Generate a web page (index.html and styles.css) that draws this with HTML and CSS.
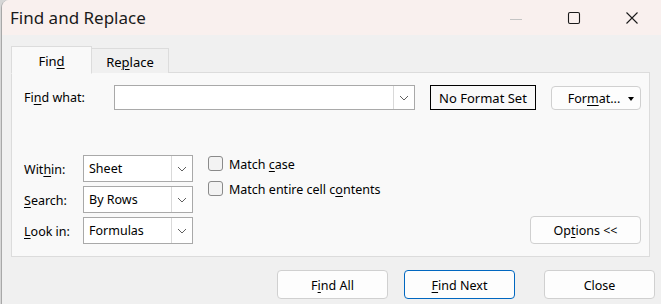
FILE: index.html
```html
<!DOCTYPE html>
<html lang="en">
<head>
    <meta charset="UTF-8">
    <title>Find and Replace</title>
    <link rel="stylesheet" href="styles.css">
</head>
<body>
    <div class="window">
        <div class="titlebar">
            <span class="title">Find and Replace</span>
            <div class="controls">
                <span class="ctl ctl-min"><svg width="14" height="14" viewBox="0 0 14 14"><path d="M1 7.5h12" stroke="#c4c4c4" stroke-width="1"/></svg></span>
                <span class="ctl"><svg width="14" height="14" viewBox="0 0 14 14"><rect x="1.5" y="1.5" width="11" height="11" rx="1.5" fill="none" stroke="#1a1a1a" stroke-width="1.1"/></svg></span>
                <span class="ctl"><svg width="14" height="14" viewBox="0 0 14 14"><path d="M1.5 1.5l11 11M12.5 1.5l-11 11" stroke="#1a1a1a" stroke-width="1.1"/></svg></span>
            </div>
        </div>

        <div class="content">
            <div class="tabs">
                <div class="tab active"><span>Fin<u>d</u></span></div>
                <div class="tab"><span>Re<u>p</u>lace</span></div>
            </div>

            <div class="panel">
                <div class="row-find">
                    <label class="lbl-find">Fi<u>n</u>d what:</label>
                    <div class="combo combo-wide">
                        <span class="combo-text"></span>
                        <span class="combo-btn"><svg width="10" height="6" viewBox="0 0 10 6"><path d="M1 1l4 4 4-4" fill="none" stroke="#606060" stroke-width="1"/></svg></span>
                    </div>
                    <div class="format-preview">No Format Set</div>
                    <button class="btn btn-format"><span>For<u>m</u>at...</span> <span class="caret"></span></button>
                </div>

                <div class="lower">
                    <div class="options-grid">
                        <label>Wit<u>h</u>in:</label>
                        <div class="combo combo-sel">
                            <span class="combo-text">Sheet</span>
                            <span class="combo-btn"><svg width="10" height="6" viewBox="0 0 10 6"><path d="M1 1l4 4 4-4" fill="none" stroke="#606060" stroke-width="1"/></svg></span>
                        </div>
                        <label><u>S</u>earch:</label>
                        <div class="combo combo-sel">
                            <span class="combo-text">By Rows</span>
                            <span class="combo-btn"><svg width="10" height="6" viewBox="0 0 10 6"><path d="M1 1l4 4 4-4" fill="none" stroke="#606060" stroke-width="1"/></svg></span>
                        </div>
                        <label><u>L</u>ook in:</label>
                        <div class="combo combo-sel">
                            <span class="combo-text">Formulas</span>
                            <span class="combo-btn"><svg width="10" height="6" viewBox="0 0 10 6"><path d="M1 1l4 4 4-4" fill="none" stroke="#606060" stroke-width="1"/></svg></span>
                        </div>
                    </div>

                    <div class="checks">
                        <div class="check"><span class="box"></span><span class="check-text">Match <u>c</u>ase</span></div>
                        <div class="check"><span class="box"></span><span class="check-text">Match entire cell c<u>o</u>ntents</span></div>
                    </div>

                    <button class="btn btn-options"><span>Op<u>t</u>ions &lt;&lt;</span></button>
                </div>
            </div>

            <div class="actions">
                <button class="btn btn-action"><span>F<u>i</u>nd All</span></button>
                <button class="btn btn-action btn-default"><span><u>F</u>ind Next</span></button>
                <button class="btn btn-action btn-close">Close</button>
            </div>
        </div>
    </div>
</body>
</html>
```

FILE: styles.css
```css
* { box-sizing: border-box; }
html, body { margin: 0; height: 100%; }
body { background: #d6d6d6; font-family: "Noto Sans", "Open Sans", sans-serif; font-size: 12.5px; color: #000; overflow: hidden; }
u { text-decoration-thickness: 1px; text-underline-offset: 2px; }

.window { margin-left: 1px; height: 304px; background: #f0f0f0; border-left: 1px solid #a8a8a8; border-top-left-radius: 8px; overflow: hidden; }

.titlebar { height: 35px; background: #f9f0ee; display: flex; align-items: center; justify-content: space-between; }
.title { font-size: 17px; padding-left: 8px; padding-bottom: 1px; color: #1a1a1a; }
.controls { display: flex; height: 100%; }
.ctl { width: 58px; display: flex; align-items: center; justify-content: center; }
.ctl-min { padding-top: 2px; }

.content { padding: 10px 6px 0 9px; }

.tabs { display: flex; align-items: flex-end; height: 28px; position: relative; z-index: 1; }
.tab { width: 77px; height: 25px; border: 1px solid #dcdcdc; border-bottom: none; background: #f0f0f0; display: flex; align-items: center; justify-content: center; padding-top: 1px; font-size: 13px; }
.tab.active { width: 81px; height: 28px; background: #f9f9f9; border-bottom: 1px solid #f9f9f9; margin-bottom: -1px; }
.tab + .tab { border-left: none; }

.panel { width: 639px; height: 185px; margin-top: -1px; background: #f9f9f9; border: 1px solid #dcdcdc; padding: 12px 8px 11px 12px; display: flex; flex-direction: column; }

.row-find { display: flex; align-items: center; height: 25px; }
.lbl-find { width: 90px; }

.combo { display: flex; background: #fff; border: 1px solid #a9a9a9; }
.combo-text { flex: 1; padding-left: 5px; display: flex; align-items: center; }
.combo-btn { width: 21px; border-left: 1px solid #d9d9d9; display: flex; align-items: center; justify-content: center; }
.combo-wide { width: 301px; height: 25px; }
.combo-sel { width: 110px; height: 27px; }

.format-preview { margin-left: 15px; width: 106px; height: 25px; border: 1px solid #000; display: flex; align-items: center; justify-content: center; background: #f9f9f9; font-size: 13px; }

.btn { font: inherit; color: #000; background: #fdfdfd; border: 1px solid #d0d0d0; border-radius: 4px; display: flex; align-items: center; justify-content: center; padding: 1px 0 0; }
.btn-format { margin-left: 15px; width: 90px; height: 24px; position: relative; padding-right: 4px; }
.caret { position: absolute; right: 6px; top: 10px; border-left: 3px solid transparent; border-right: 3px solid transparent; border-top: 4px solid #000; }

.lower { display: flex; align-items: flex-start; margin-top: 45px; }
.options-grid { display: grid; grid-template-columns: 59px 110px; row-gap: 4px; align-items: center; }
.options-grid label { padding-top: 1px; }
.checks { margin-left: 15px; display: flex; flex-direction: column; gap: 10px; padding-top: 1px; }
.check { display: flex; align-items: center; gap: 6px; height: 15px; }
.check-text { padding-top: 2px; }
.box { width: 15px; height: 15px; border: 1px solid #8a8a8a; border-radius: 3px; background: #f3f3f3; }
.btn-options { margin-left: auto; margin-top: 61px; width: 111px; height: 28px; }

.actions { display: flex; justify-content: flex-end; margin-top: 13px; }
.btn-action { width: 111px; height: 29px; }
.btn-default { margin-left: 16px; border-color: #0067c0; }
.btn-close { margin-left: 29px; }
```
